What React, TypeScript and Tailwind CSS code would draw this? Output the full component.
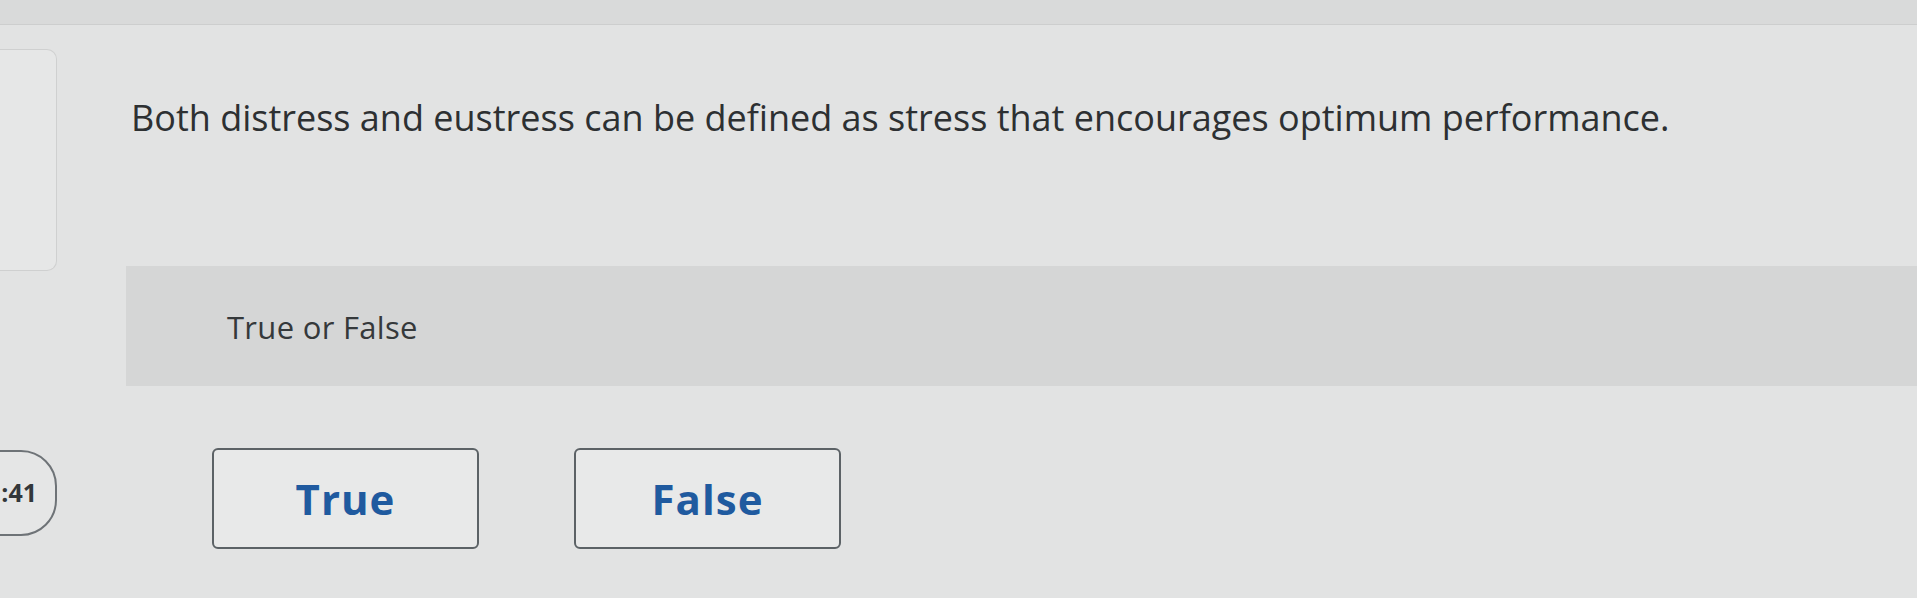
export default function App() {
  return (
    <div className="h-[598px] w-full overflow-hidden bg-[#e2e3e3] font-['Open_Sans',sans-serif] text-[#2d3032]">
      {/* header strip */}
      <div className="h-[25px] border-b border-[#cdcece] bg-[#d9dada]" />

      <div className="flex">
        {/* left rail */}
        <div className="flex w-[126px] shrink-0 flex-col">
          <div className="mt-[24px] h-[222px] w-[57px] rounded-r-[10px] border border-l-0 border-[#cfd0d0] bg-[#e6e7e7]" />
          <div className="-ml-[30px] mt-[179px] flex h-[86px] w-[87px] items-center justify-end rounded-r-[36px] border-2 border-[#6e7377] bg-[#e5e6e6] pr-[18px]">
            <span className="text-[25px] font-bold text-[#33373a]">:41</span>
          </div>
        </div>

        {/* question */}
        <div className="flex flex-1 flex-col">
          <p className="pl-[5px] pt-[70px] text-[36px] leading-[46px]">
            Both distress and eustress can be defined as stress that encourages optimum performance.
          </p>

          <div className="mt-[125px] h-[120px] bg-[#d5d6d6] pl-[101px] pt-[41px]">
            <span className="text-[31px] leading-[40px] tracking-[0.3px] text-[#35393b]">True or False</span>
          </div>

          <div className="flex gap-[95px] pl-[86px] pt-[62px]">
            <button className="flex h-[101px] w-[267px] items-center justify-center rounded-[6px] border-2 border-[#5c6266] bg-[#e8e9e9] text-[42px] font-bold tracking-[1px] text-[#1f5a9f]">
              True
            </button>
            <button className="flex h-[101px] w-[267px] items-center justify-center rounded-[6px] border-2 border-[#5c6266] bg-[#e8e9e9] text-[42px] font-bold tracking-[1px] text-[#1f5a9f]">
              False
            </button>
          </div>
        </div>
      </div>
    </div>
  )
}
